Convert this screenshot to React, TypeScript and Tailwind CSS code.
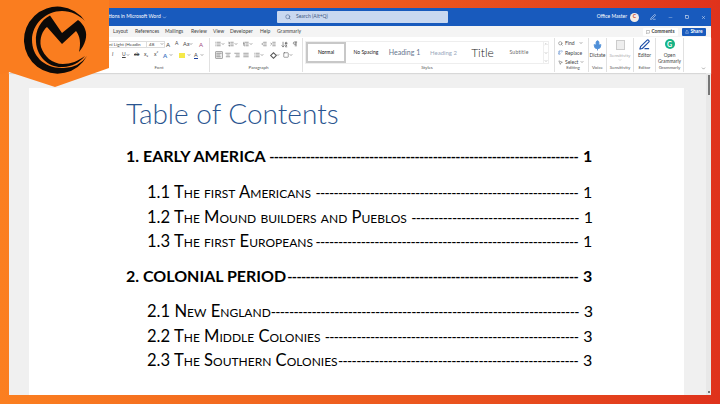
import {
  AlignCenter,
  AlignJustify,
  AlignLeft,
  AlignRight,
  ArrowDownAZ,
  ChevronDown,
  ChevronUp,
  Indent,
  List,
  ListOrdered,
  ListTree,
  MessageSquare,
  Mic,
  Minus,
  MousePointer2,
  Outdent,
  PenLine,
  Pilcrow,
  Replace,
  Search,
  Share,
  Square,
  X,
} from "lucide-react";

const tabs = [
  ["Layout", "w-[22px]"],
  ["References", "w-[30px]"],
  ["Mailings", "w-[26px]"],
  ["Review", "w-[22px]"],
  ["View", "w-[17px]"],
  ["Developer", "w-[30px]"],
  ["Help", "w-[17px]"],
  ["Grammarly", "w-[30px]"],
];

const rows = [
  { label: "1. EARLY AMERICA", page: "1", dashes: 68, head: true, gap: "mt-[11px]" },
  { label: "1.1 The first Americans ", page: "1", dashes: 58, gap: "mt-[12px]" },
  { label: "1.2 The Mound builders and Pueblos ", page: "1", dashes: 37, gap: "mt-[1px]" },
  { label: "1.3 The first Europeans", page: "1", dashes: 58, gap: "mt-0" },
  { label: "2. COLONIAL PERIOD", page: "3", dashes: 64, head: true, gap: "mt-[11px]" },
  { label: "2.1 New England", page: "3", dashes: 68, gap: "mt-[11px]" },
  { label: "2.2 The Middle Colonies ", page: "3", dashes: 56, gap: "mt-[1px]" },
  { label: "2.3 The Southern Colonies", page: "3", dashes: 53, gap: "mt-0" },
];

function Group({ label, className, children }: { label: string; className: string; children: React.ReactNode }) {
  return (
    <div className={`flex h-full flex-col border-r border-[#e1e1e1] ${className}`}>
      <div className="min-h-0 flex-1">{children}</div>
      <div className="h-[8px] text-center text-[4.5px] leading-[8px] text-[#555]">{label}</div>
    </div>
  );
}

function Caret({ className = "" }: { className?: string }) {
  return <ChevronDown className={`h-[4px] w-[4px] text-[#555] ${className}`} strokeWidth={3} />;
}

function Logo() {
  return (
    <svg viewBox="0 0 115 95" className="absolute left-0 top-0 h-[95px] w-[115px]">
      <polygon points="0,0 109,0 109,68 55,87 9,72 0,74" fill="#fa7d1f" />
      <path d="M85,21 A33.5,33.5 0 1 0 87,56 A29,29 0 0 1 62,68 C43,68 32,55 32,40 C32,24 46,11 62,11 C71,11 79,15 85,21 Z" fill="#0c0a08" />
      <path d="M50,15.5 C41,20 35,30 36,42 C37,57 49,68 63,67 C72,66.5 79,63 85,56 C78,61 71,64 63,64 C52,64 44,56 41,47 C39,38 43,30 47,27 L62,44 L76,31 C80,36 81,43 79,52 C85,45 88,36 85,29 C84,26 81,22 78,20 L62,33 Z" fill="#0c0a08" />
    </svg>
  );
}

export default function App() {
  return (
    <div className="relative h-[404px] w-[720px] overflow-hidden bg-linear-to-r from-[#fb7f20] to-[#df321c] px-[9px] pb-[9px] pt-[8px] font-['Lato',sans-serif]">
      <div className="flex h-full flex-col bg-[#f0f0f0]">
        {/* title bar */}
        <div className="flex h-[18px] shrink-0 items-center bg-[#185abd] text-white">
          <div className="flex w-[268px] items-center gap-[1px] pl-[92px] text-[5px]">
            <span>Sections in Microsoft Word</span>
            <ChevronDown className="h-[5px] w-[5px]" />
          </div>
          <div className="flex h-[12px] w-[171px] items-center gap-[5px] rounded-[1px] bg-[#c9d8f0] pl-[8px] text-[5px] text-[#3c5680]">
            <Search className="h-[6px] w-[6px]" />
            <span>Search (Alt+Q)</span>
          </div>
          <div className="ml-auto flex items-center text-[5px]">
            <span className="mr-[3px]">Office Master</span>
            <div className="mr-[11px] flex h-[9px] w-[9px] items-center justify-center rounded-full bg-[#f4ece6] text-[5px] font-bold text-[#c8401c]">C</div>
            <PenLine className="mr-[12px] h-[6px] w-[6px]" />
            <Minus className="mr-[12px] h-[5px] w-[5px] opacity-70" />
            <Square className="mr-[12px] h-[4px] w-[4px]" strokeWidth={3} />
            <X className="mr-[5px] h-[5px] w-[5px]" />
          </div>
        </div>

        {/* tab strip */}
        <div className="flex h-[11px] shrink-0 items-center bg-[#f4f4f4] text-[#444]">
          <div className="flex pl-[104px] text-[5px]">
            {tabs.map(([t, w]) => (
              <span key={t} className={`${w} whitespace-nowrap`}>{t}</span>
            ))}
          </div>
          <div className="ml-auto flex items-center gap-[4px] pr-[5px] text-[4.8px]">
            <div className="flex h-[8px] w-[35px] items-center justify-center gap-[1px] rounded-[1px] bg-white font-bold">
              <MessageSquare className="h-[4px] w-[4px]" />
              Comments
            </div>
            <div className="flex h-[8px] w-[24px] items-center justify-center gap-[1px] rounded-[1px] bg-[#185abd] font-bold text-white">
              <Share className="h-[4px] w-[4px]" />
              Share
            </div>
          </div>
        </div>

        {/* ribbon */}
        <div className="flex h-[36px] shrink-0 items-stretch bg-white py-[1px] text-[#444] shadow-[0_1px_1px_#d8d8d8]">
          <Group label="Font" className="w-[201px] pl-[100px]">
            <div className="flex h-[12px] items-center text-[4.6px]">
              <span className="flex h-[7px] w-[38px] items-center overflow-hidden whitespace-nowrap border-y border-r border-[#ddd]">ni Light (Headin</span>
              <span className="flex h-[7px] w-[18px] items-center justify-between border-y border-r border-[#ddd] pl-[2px]">48<Caret /></span>
              <span className="w-[10px] pl-[1px] text-[6px]">A</span>
              <span className="w-[8px] text-[5px]">A</span>
              <span className="flex w-[16px] items-center text-[5.5px]">Aa<Caret /></span>
              <span className="text-[6px] text-[#a0487a]">A</span>
            </div>
            <div className="flex h-[10px] items-center text-[5px]">
              <span className="w-[10px] pl-[3px] italic">I</span>
              <span className="flex w-[15px] items-center pl-[3px] underline">U<Caret /></span>
              <span className="w-[10px] line-through">ab</span>
              <span className="w-[10px]">x₂</span>
              <span className="w-[9px]">x²</span>
              <span className="flex w-[16px] items-center text-[6px] font-bold text-[#3f78c4]">A<Caret className="ml-[2px]" /></span>
              <span className="flex w-[15px] items-center"><span className="block h-[5px] w-[6px] bg-[#f5e94a]" /><Caret className="ml-[2px]" /></span>
              <span className="flex items-center"><span className="border-b border-[#1c3f9e] text-[5.5px] leading-[6px]">A</span><Caret className="ml-[2px]" /></span>
            </div>
          </Group>

          <Group label="Paragraph" className="w-[93px] pl-[5px]">
            <div className="flex h-[12px] items-center">
              <List className="h-[6px] w-[6px]" /><Caret className="mr-[3px]" />
              <ListOrdered className="h-[6px] w-[6px]" /><Caret className="mr-[5px]" />
              <ListTree className="h-[6px] w-[6px]" /><Caret className="mr-[8px]" />
              <Outdent className="mr-[3px] h-[6px] w-[6px]" />
              <Indent className="mr-[5px] h-[6px] w-[6px]" />
              <ArrowDownAZ className="mr-[4px] h-[7px] w-[7px]" />
              <Pilcrow className="h-[6px] w-[6px]" />
            </div>
            <div className="flex h-[10px] items-center">
              <div className="mr-[2px] rounded-[1px] border border-[#aaa] bg-[#eee]"><AlignLeft className="h-[6px] w-[6px]" /></div>
              <AlignCenter className="mr-[3px] h-[6px] w-[6px]" />
              <AlignRight className="mr-[3px] h-[6px] w-[6px]" />
              <AlignJustify className="mr-[5px] h-[6px] w-[6px]" />
              <List className="h-[6px] w-[6px]" /><Caret className="mr-[7px]" />
              <span className="h-[5px] w-[5px] rotate-45 border border-[#555]" /><Caret className="mr-[3px]" />
              <Square className="h-[6px] w-[6px]" /><Caret />
            </div>
          </Group>

          <Group label="Styles" className="w-[252px] pl-[2px] pr-[5px]">
            <div className="mt-[3px] flex h-[23px] items-center border border-[#eee]">
              <div className="flex h-full w-[40px] shrink-0 items-center justify-center border-2 border-[#c8c8c8] text-[5px] text-black">Normal</div>
              <span className="w-[40px] shrink-0 text-center text-[5px] text-[#222]">No Spacing</span>
              <span className="w-[37px] shrink-0 text-center text-[7px] text-[#66768e]">Heading 1</span>
              <span className="w-[41px] shrink-0 text-center text-[6px] text-[#9aa8bc]">Heading 2</span>
              <span className="w-[37px] shrink-0 text-center text-[12px] font-light text-[#222]">Title</span>
              <span className="w-[36px] shrink-0 text-center text-[5px] tracking-[0.3px] text-[#666]">Subtitle</span>
              <div className="ml-auto flex h-full w-[5px] flex-col items-center justify-between border-l border-[#eee] text-[#666]">
                <ChevronUp className="h-[4px] w-[4px]" />
                <ChevronDown className="h-[4px] w-[4px]" />
                <ChevronDown className="h-[4px] w-[4px]" />
              </div>
            </div>
          </Group>

          <Group label="Editing" className="w-[34px] pl-[3px]">
            <div className="flex flex-col gap-[1.5px] pt-[1px] text-[5px] leading-[8px]">
              <div className="flex items-center gap-[2px]"><Search className="h-[5px] w-[5px]" />Find<Caret className="ml-[2px]" /></div>
              <div className="flex items-center gap-[2px]"><Replace className="h-[5px] w-[5px] text-[#3f78c4]" />Replace</div>
              <div className="flex items-center gap-[2px]"><MousePointer2 className="h-[5px] w-[5px]" />Select<Caret /></div>
            </div>
          </Group>

          <Group label="Voice" className="w-[18px]">
            <div className="flex flex-col items-center pt-[2px] text-[5px]">
              <Mic className="h-[11px] w-[11px] fill-[#4f8fd8] text-[#4f8fd8]" />
              <span className="mt-[1px] leading-[6px]">Dictate</span>
            </div>
          </Group>

          <Group label="Sensitivity" className="w-[27px]">
            <div className="flex flex-col items-center pt-[2px] text-[4.6px] text-[#aaa]">
              <div className="h-[10px] w-[9px] border border-[#ccc] bg-[#eee]" />
              <span className="mt-[2px] leading-[6px]">Sensitivity</span>
              <Caret className="text-[#bbb]" />
            </div>
          </Group>

          <Group label="Editor" className="w-[22px]">
            <div className="flex flex-col items-center pt-[1px] text-[5px]">
              <PenLine className="h-[11px] w-[11px] text-[#1f4fa8]" strokeWidth={2.5} />
              <span className="mt-[2px] leading-[6px]">Editor</span>
            </div>
          </Group>

          <Group label="Grammarly" className="w-[28px]">
            <div className="flex flex-col items-center pt-[1px] text-[4.8px]">
              <div className="flex h-[10px] w-[10px] items-center justify-center rounded-full bg-[#15b386] text-[7px] font-bold leading-none text-white">G</div>
              <span className="mt-[3px] leading-[6px]">Open</span>
              <span className="leading-[6px]">Grammarly</span>
            </div>
          </Group>

          <div className="flex flex-1 items-end justify-end pb-[1px] pr-[5px]">
            <ChevronDown className="h-[5px] w-[5px]" />
          </div>
        </div>

        {/* document area */}
        <div className="flex min-h-0 flex-1">
          <div className="ml-[20px] mt-[15px] w-[655px] bg-white pl-[97px] pr-[92px] pt-[5px] text-black">
            <div className="h-[40px] whitespace-nowrap text-[28px] font-light leading-[40px] text-[#2a5590]">Table of Contents</div>
            {rows.map((r) => (
              <div key={r.label} className={`flex h-[24px] items-center justify-between whitespace-pre ${r.gap} ${r.head ? "text-[16px] font-bold" : "pl-[21px] text-[16.6px] [font-variant:small-caps]"}`}>
                <span>{r.label}</span>
                <span className={`ml-auto text-[14px] tracking-[-0.68px] ${r.head ? "" : "font-medium"}`}>{"-".repeat(r.dashes)}</span>
                <span className="ml-[5px] w-[9px] text-[16px]">{r.page}</span>
              </div>
            ))}
          </div>
          <div className="ml-auto flex w-[5px] flex-col items-center justify-between bg-[#e8e8e8] pb-[2px] pt-[2px]">
            <div className="h-[20px] w-[2px] bg-[#777]" />
            <div className="h-[2px] w-[2px] bg-[#777]" />
          </div>
        </div>
      </div>
      <Logo />
    </div>
  );
}
